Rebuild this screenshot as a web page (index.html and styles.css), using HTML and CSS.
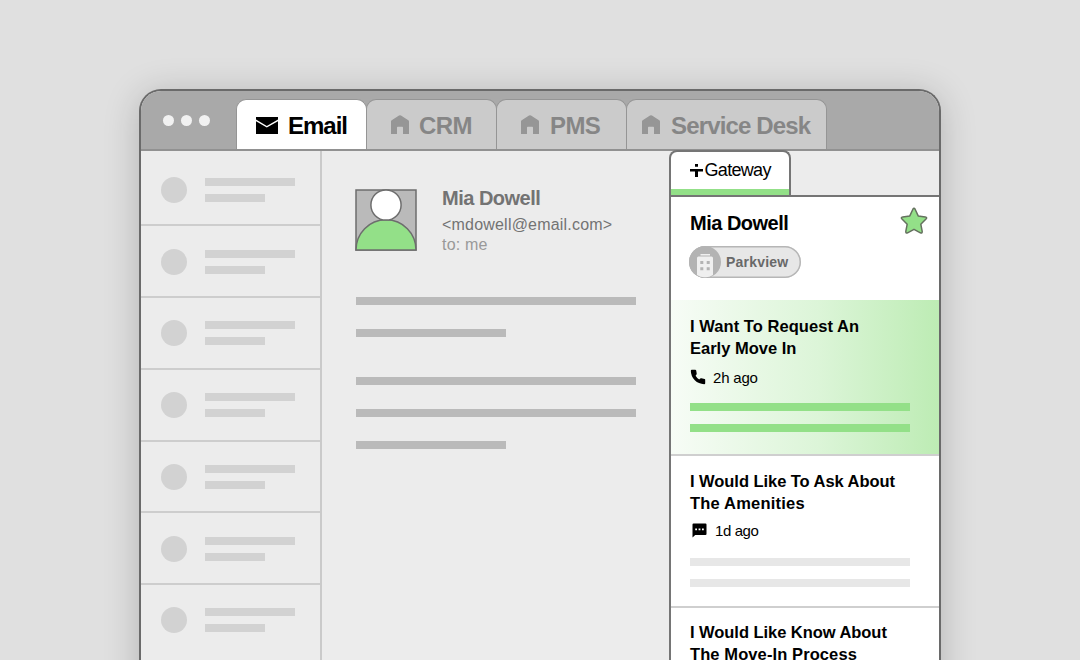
FILE: index.html
```html
<!DOCTYPE html>
<html lang="en">
<head>
<meta charset="utf-8">
<title>Gateway</title>
<link rel="stylesheet" href="styles.css">
</head>
<body>
<svg class="defs" width="0" height="0">
  <symbol id="house" viewBox="0 0 18 19"><path d="M0 19V6.500Q0 5.700.7 5.200L8 .6Q9 0 10 .6L17.300 5.200Q18 5.700 18 6.500V19H12V12.500Q12 11.800 11.300 11.800H6.700Q6 11.800 6 12.500V19Z"/></symbol>
</svg>
<div class="window">
  <header class="topbar">
    <div class="dots"><i></i><i></i><i></i></div>
    <nav class="tabs">
      <div class="tab active"><svg class="mail" width="22" height="17" viewBox="0 0 22 17"><path d="M0 0H22V2.600L10.800 8.900 0 2.600ZM0 4.300 10.800 10.600 22 4.300V17H0Z"/></svg><span class="t-email">Email</span></div>
      <div class="tab crm"><svg class="house" width="18" height="19"><use href="#house"/></svg><span class="t-crm">CRM</span></div>
      <div class="tab pms"><svg class="house" width="18" height="19"><use href="#house"/></svg><span class="t-pms">PMS</span></div>
      <div class="tab desk"><svg class="house" width="18" height="19"><use href="#house"/></svg><span class="t-desk">Service Desk</span></div>
    </nav>
  </header>
  <main class="body">
    <aside class="list">
      <div class="row first"><i class="ball"></i><div class="lines"><i></i><i></i></div></div>
      <div class="row"><i class="ball"></i><div class="lines"><i></i><i></i></div></div>
      <div class="row"><i class="ball"></i><div class="lines"><i></i><i></i></div></div>
      <div class="row"><i class="ball"></i><div class="lines"><i></i><i></i></div></div>
      <div class="row"><i class="ball"></i><div class="lines"><i></i><i></i></div></div>
      <div class="row"><i class="ball"></i><div class="lines"><i></i><i></i></div></div>
      <div class="row"><i class="ball"></i><div class="lines"><i></i><i></i></div></div>
    </aside>
    <section class="message">
      <div class="sender">
        <svg width="62" height="62" viewBox="0 0 62 62" stroke="#6d6d6d" stroke-width="1.500"><path fill="#bababa" d="M1 1H61V61H1Z"/><path fill="#93e088" d="M1 61C1 44.500 14 30.800 31 30.800S61 44.500 61 61Z"/><circle cx="31" cy="16" r="15.100" fill="#fff"/></svg>
        <div class="who">
          <div class="name">Mia Dowell</div>
          <div class="addr">&lt;mdowell@email.com&gt;</div>
          <div class="to">to: me</div>
        </div>
      </div>
      <div class="copy"><i></i><i class="short gap"></i><i></i><i></i><i class="short"></i></div>
    </section>
    <aside class="panel">
      <div class="gateway">
        <svg width="13" height="13" viewBox="0 0 13 13"><path d="M0 5H13V7.500H8V13H5V7.500H0ZM5 0H8V2.700H5Z"/></svg><span>Gateway</span>
      </div>
      <div class="content">
        <div class="profile">
          <div class="head">
            <div class="pname">Mia Dowell</div>
            <svg class="star" width="28" height="28" viewBox="0 0 28 28"><path d="M12.900 2.200Q14 .200 15.100 2.200L18.200 8.900 25.300 9.900Q27.600 10.300 26 12L20.800 17.200 22.200 24.400Q22.400 26.700 20.400 25.800L14 22.300 7.600 25.800Q5.600 26.700 5.800 24.400L7.200 17.200 2 12Q.400 10.300 2.700 9.900L9.800 8.900Z" fill="#93e088" stroke="#65715f" stroke-width="1.500" stroke-linejoin="round"/></svg>
          </div>
          <div class="chip">
            <svg width="32" height="32" viewBox="0 0 32 32"><circle cx="16" cy="16" r="16" fill="#b3b3b3"/><path fill="#efefef" d="M11.500 8H21V9.500H11.500ZM9.500 10.500H22.500Q24 10.500 24 12V29Q20 31.500 16 31.200 12 31.500 8 29V12Q8 10.500 9.500 10.500Z"/><path fill="#b3b3b3" d="M11.300 15H14.300V18H11.300ZM17.700 15H20.700V18H17.700ZM11.300 21.300H14.300V24.300H11.300ZM17.700 21.300H20.700V24.300H17.700Z"/></svg>
            <span>Parkview</span>
          </div>
        </div>
        <article class="card hot">
          <h2><span class="a1">I Want To Request An</span><br><span class="a2">Early Move In</span></h2>
          <div class="meta"><svg width="16" height="16" viewBox="0 0 16 16"><path d="M.8 1.800Q.8.8 1.800.8H5.200Q6 .8 6.200 1.500L6.700 4.600Q6.800 5.300 6.300 5.800L5.600 6.800Q6.900 9.200 9.200 10.500L10.200 9.600Q10.700 9.200 11.400 9.300L14.600 9.900Q15.200 10.100 15.200 10.800V14.200Q15.200 15.200 14.200 15.200Q8.600 15 4.800 11.300.9 7.400.8 1.800Z"/></svg><span>2h ago</span></div>
          <div class="bars"><i></i><i></i></div>
        </article>
        <article class="card">
          <h2><span class="b1">I Would Like To Ask About</span><br><span class="b2">The Amenities</span></h2>
          <div class="meta chat"><svg width="15" height="15" viewBox="0 0 15 15"><path d="M1.500.500H13.500Q14.500.500 14.500 1.500V11Q14.500 12 13.500 12H3.200L.500 14.500V1.500Q.500.500 1.500.500Z"/><path fill="#fff" d="M3.200 5.500H5V7.200H3.200ZM6.600 5.500H8.400V7.200H6.600ZM10 5.500H11.800V7.200H10Z"/></svg><span>1d ago</span></div>
          <div class="bars"><i></i><i></i></div>
        </article>
        <article class="card">
          <h2><span class="c1">I Would Like Know About</span><br><span class="c2">The Move-In Process</span></h2>
        </article>
      </div>
    </aside>
  </main>
</div>
</body>
</html>
```

FILE: styles.css
```css
* { box-sizing: border-box; }
body {
  margin: 0;
  height: 660px;
  overflow: hidden;
  padding: 89px 139px 0;
  background: #e0e0e0;
  font-family: "Liberation Sans", Arial, sans-serif;
}
i { display: block; }
svg { display: block; flex: none; }
span, .name, .addr, .to, .pname { white-space: nowrap; }
.defs { position: absolute; }
.window {
  width: 802px;
  height: 640px;
  border: 2px solid #6a6a6a;
  border-bottom: 0;
  border-radius: 22px 22px 0 0;
  overflow: hidden;
  background: #ececec;
  box-shadow: 0 4px 36px rgba(0, 0, 0, .2);
}
.topbar {
  display: flex;
  align-items: flex-end;
  height: 60px;
  background: #a9a9a9;
  border-bottom: 2px solid #919191;
}
.dots { display: flex; gap: 7px; width: 95px; padding: 0 0 23.500px 22px; }
.dots i { width: 11px; height: 11px; border-radius: 50%; background: #f1f1f1; }
.tabs { display: flex; }
.tab {
  display: flex;
  align-items: center;
  width: 131px;
  height: 50px;
  margin-right: -1px;
  padding-top: 3px;
  border: 1px solid #959595;
  border-bottom: 0;
  border-radius: 10px 10px 0 0;
  background: #cbcbcb;
  color: #868686;
  font-size: 24px;
  font-weight: 700;
  line-height: 28px;
}
.tab.active { background: #fff; color: #000; padding-left: 19px; }
.mail { margin: -1px 10px 0 0; }
.house { margin: -3px 10px 0 0; fill: #969696; }
.crm { padding-left: 24px; }
.pms { padding-left: 24px; }
.pms .house { margin-right: 11px; }
.desk { padding-left: 15px; width: 201px; }
.desk .house { margin-right: 11px; }
.t-email { letter-spacing: -1px; }
.t-crm { letter-spacing: -.6px; }
.t-pms { letter-spacing: -.6px; }
.t-desk { letter-spacing: -.85px; }
.body { display: flex; height: 578px; }
.list { width: 181px; border-right: 2px solid #cacaca; flex: none; }
.row {
  display: flex;
  flex: none;
  height: 71.75px;
  padding: 22.200px 0 0 20px;
  border-bottom: 2px solid #cdcdcd;
}
.row.first { height: 75.400px; padding-top: 26px; }
.row:last-child { border: 0; }
.ball { width: 26px; height: 26px; border-radius: 50%; background: #d2d2d2; }
.lines { display: grid; align-content: start; gap: 8px; margin: 1px 0 0 17.500px; }
.lines i { width: 90px; height: 8px; background: #d2d2d2; }
.lines i:last-child { width: 60px; }
.message { width: 347px; flex: none; padding: 38px 0 0 33px; }
.sender { display: flex; gap: 25px; }
.who { color: #737373; margin-top: -1px; }
.name { font-size: 20px; font-weight: 700; line-height: 20px; letter-spacing: -.5px; margin-bottom: 7px; }
.addr { font-size: 16px; line-height: 20px; letter-spacing: .2px; }
.to { font-size: 16px; line-height: 20px; color: #999; letter-spacing: .2px; }
.copy { display: grid; gap: 24px; margin: 42px 0 0 1px; }
.copy i { width: 280px; height: 8px; background: #bababa; }
.copy .short { width: 149.500px; }
.copy .gap { margin-bottom: 16px; }
.panel { flex: 1; }
.gateway {
  position: relative;
  display: flex;
  gap: 1.500px;
  width: 122px;
  height: 45px;
  margin-top: -1px;
  padding: 12px 0 0 19px;
  border: 2px solid #757575;
  border-bottom: 0;
  border-radius: 8px 8px 0 0;
  background: linear-gradient(#93e088, #93e088) 0 100% / 100% 6px no-repeat #fff;
}
.gateway span { font-size: 18px; line-height: 20px; margin-top: -4px; letter-spacing: -.68px; }
.content { height: 534px; background: #fff; border-left: 2px solid #757575; border-top: 2px solid #757575; }
.profile { height: 103px; padding: 10px 11px 0 18px; }
.head { display: flex; justify-content: space-between; }
.pname { font-size: 20px; font-weight: 700; line-height: 20px; letter-spacing: -.5px; padding: 6px 0 0 1px; }
.chip {
  display: flex;
  align-items: center;
  gap: 5px;
  width: 112px;
  height: 32px;
  margin-top: 10.500px;
  border-radius: 16px;
  background: #e7e7e7;
  box-shadow: inset 0 0 0 1.500px #b6b6b6;
  color: #696969;
  font-size: 14px;
  font-weight: 700;
}
.chip span { letter-spacing: .2px; }
.card { height: 151.500px; padding: 13.500px 0 0 19px; border-bottom: 2px solid #cfcfcf; }
.card:last-child { border: 0; }
.hot { height: 156px; padding-top: 15px; background: linear-gradient(90deg, #f7fcf6, #dcf5d8 55%, #bdecb4); }
h2 { margin: 0; font-size: 16.500px; line-height: 22px; }
.a1 { letter-spacing: .05px; }
.a2 { letter-spacing: 0; }
.b1 { letter-spacing: -.05px; }
.b2 { letter-spacing: .2px; }
.c1 { letter-spacing: -.05px; }
.c2 { letter-spacing: .1px; }
.meta { display: flex; align-items: center; gap: 7px; height: 20px; margin-top: 8px; font-size: 15px; letter-spacing: -.2px; }
.chat { padding-left: 2px; gap: 8px; margin-top: 7px; letter-spacing: -.4px; }
.bars { display: grid; gap: 13px; margin-top: 16px; }
.chat + .bars { margin-top: 17.500px; }
.bars i { width: 220px; height: 8px; background: #e7e7e7; }
.hot .bars i { background: #93e088; }
```
